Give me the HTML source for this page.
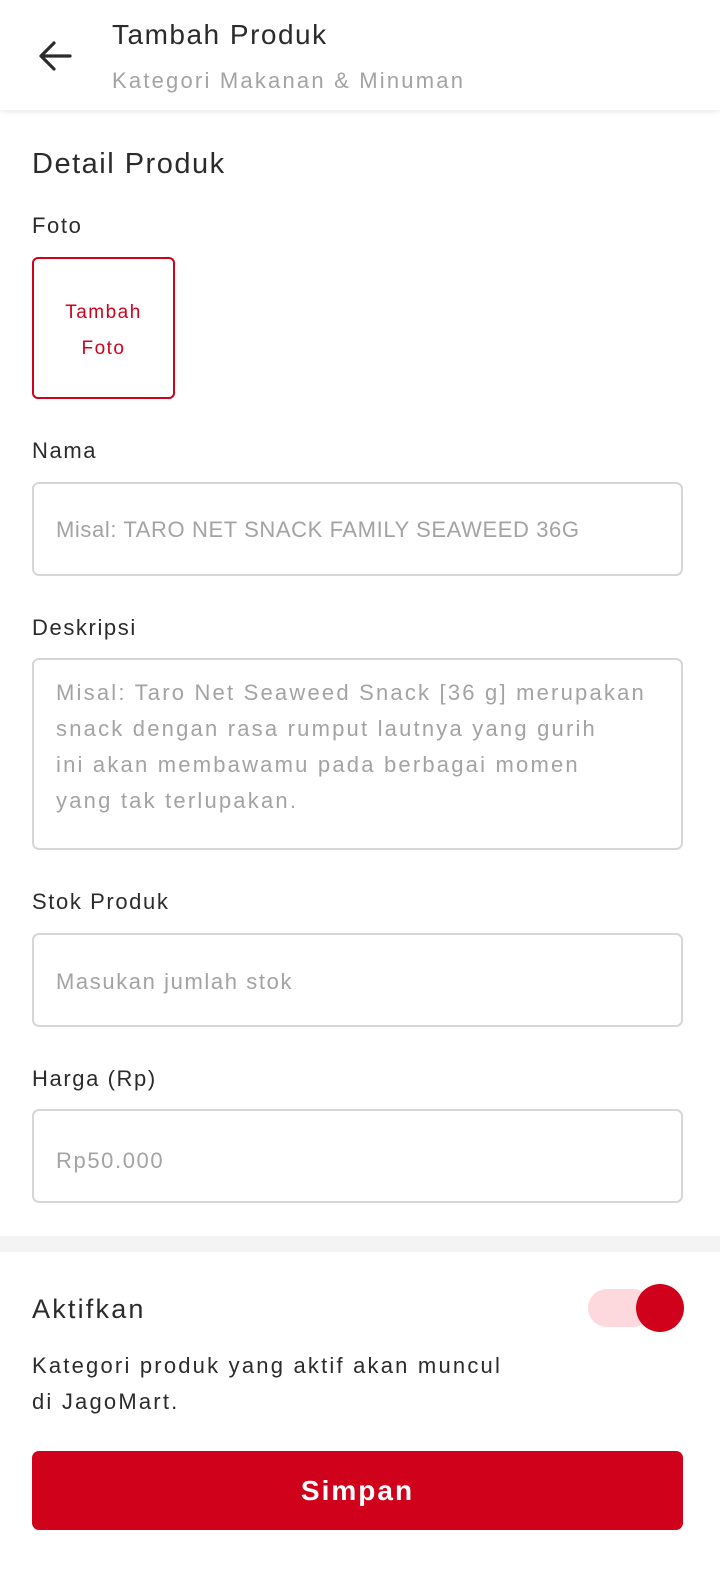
<!DOCTYPE html>
<html><head><meta charset="utf-8"><style>
*{margin:0;padding:0;box-sizing:border-box}
body{width:720px;height:1578px;background:#fff;font-family:"Liberation Sans",sans-serif;color:#2b2b2b;position:relative;overflow:hidden}
.a{position:absolute;white-space:nowrap}
.hdr{position:absolute;left:0;top:0;width:720px;height:110px;background:#fff;box-shadow:0 2px 6px rgba(0,0,0,.08)}
.lbl{font-size:22px;color:#2b2b2b;letter-spacing:1.6px}
.inp{position:absolute;left:32px;width:651px;border:2px solid #d6d6d6;border-radius:7px}
.ph{font-size:22px;color:#a3a3a3;letter-spacing:1.6px}
</style></head><body>
<div class="hdr"></div>
<svg class="a" style="left:36px;top:38px" width="40" height="36" viewBox="0 0 40 36"><path d="M34 18H6M18 5L5 18l13 13" fill="none" stroke="#2b2b2b" stroke-width="3.2" stroke-linecap="round" stroke-linejoin="round"/></svg>
<div class="a" style="left:112px;top:19px;font-size:28px;letter-spacing:1.5px">Tambah Produk</div>
<div class="a" style="left:112px;top:68px;font-size:22px;color:#a3a3a3;letter-spacing:2.2px">Kategori Makanan &amp; Minuman</div>
<div class="a" style="left:32px;top:148px;font-size:29px;letter-spacing:1.5px">Detail Produk</div>
<div class="a lbl" style="left:32px;top:213px">Foto</div>
<div class="a" style="left:32px;top:257px;width:143px;height:142px;border:2px solid #d0021b;border-radius:6px;color:#d0021b;font-size:19px;letter-spacing:1.5px;text-align:center;line-height:36px;padding-top:36px">Tambah<br>Foto</div>
<div class="a lbl" style="left:32px;top:438px">Nama</div>
<div class="inp" style="top:482px;height:94px"><div class="a ph" style="left:22px;top:33px;letter-spacing:0.6px">Misal: TARO NET SNACK FAMILY SEAWEED 36G</div></div>
<div class="a lbl" style="left:32px;top:615px">Deskripsi</div>
<div class="inp" style="top:658px;height:192px"><div class="a ph" style="left:22px;top:15px;line-height:36px;letter-spacing:2.2px">Misal: Taro Net Seaweed Snack [36 g] merupakan<br>snack dengan rasa rumput lautnya yang gurih<br>ini akan membawamu pada berbagai momen<br>yang tak terlupakan.</div></div>
<div class="a lbl" style="left:32px;top:889px">Stok Produk</div>
<div class="inp" style="top:933px;height:94px"><div class="a ph" style="left:22px;top:34px">Masukan jumlah stok</div></div>
<div class="a lbl" style="left:32px;top:1066px">Harga (Rp)</div>
<div class="inp" style="top:1109px;height:94px"><div class="a ph" style="left:22px;top:37px">Rp50.000</div></div>
<div class="a" style="left:0;top:1236px;width:720px;height:16px;background:#f4f4f4"></div>
<div class="a" style="left:32px;top:1294px;font-size:27px;letter-spacing:2.2px">Aktifkan</div>
<div class="a" style="left:588px;top:1289px;width:64px;height:38px;border-radius:19px;background:#fdd9dd"></div>
<div class="a" style="left:636px;top:1284px;width:48px;height:48px;border-radius:50%;background:#d0021b"></div>
<div class="a" style="left:32px;top:1348px;font-size:22px;line-height:36px;letter-spacing:2.2px">Kategori produk yang aktif akan muncul<br>di JagoMart.</div>
<div class="a" style="left:32px;top:1451px;width:651px;height:79px;background:#d0021b;border-radius:7px;color:#fff;font-size:28px;font-weight:bold;letter-spacing:2px;text-align:center;line-height:79px">Simpan</div>
</body></html>
